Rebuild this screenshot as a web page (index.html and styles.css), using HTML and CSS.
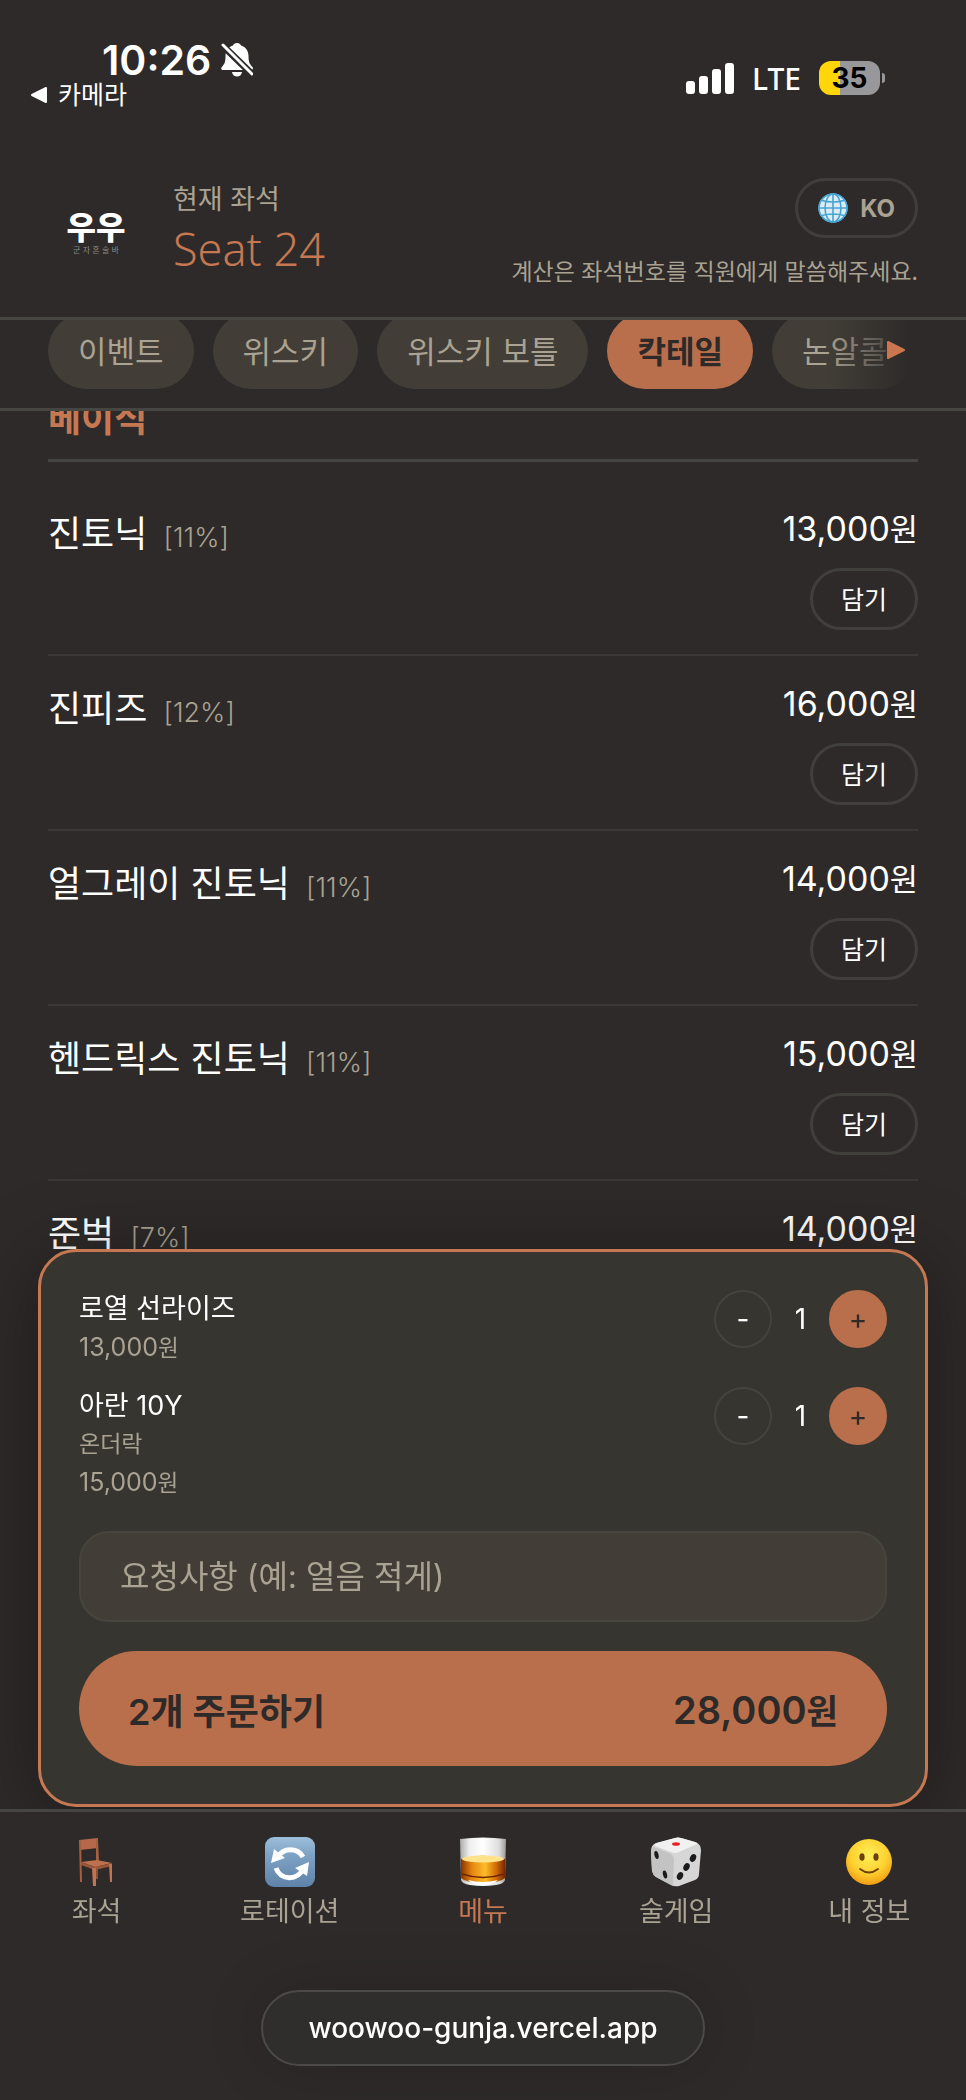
FILE: index.html
```html
<!DOCTYPE html>
<html lang="ko">
<head>
    <meta charset="UTF-8">
    <meta name="viewport" content="width=device-width, initial-scale=1.0">
    <title>우우 - 메뉴</title>
    <link rel="stylesheet" href="styles.css">
</head>
<body>
    <div class="status-bar">
        <div class="status-left">
            <div class="status-time">
                <span>10:26</span>
                <svg class="bell" viewBox="0 0 32 36" aria-hidden="true">
                    <path fill="#fff" d="M16 1c2 0 3.500 1 4 2.500 5 1.500 7.500 5.500 7.500 10.500 0 6 1 8 4 11 .8 1 .5 3-1.500 3H2C0 28-.2 26 .8 25c2.800-3 3.700-5 3.700-11C4.500 9 7 5 12 3.500 12.500 2 14 1 16 1z"/>
                    <path fill="#fff" d="M11 30h10c-.5 3-2.500 4.500-5 4.500S11.500 33 11 30z"/>
                    <path stroke="#2d2a29" stroke-width="7" d="M-1 1l34 33"/>
                    <path stroke="#fff" stroke-width="3" stroke-linecap="round" d="M2 3l29 29"/>
                </svg>
            </div>
            <a class="status-back" href="#">
                <svg class="back-arrow" viewBox="0 0 18 18" aria-hidden="true"><path fill="#fff" stroke="#fff" stroke-width="2" stroke-linejoin="round" d="M2 9l14-7v14z"/></svg>
                카메라
            </a>
        </div>
        <div class="status-right">
            <svg class="signal" viewBox="0 0 48 31" fill="#fff" aria-hidden="true">
                <rect x="0" y="18" width="9" height="13" rx="3"/>
                <rect x="13" y="13" width="9" height="18" rx="3"/>
                <rect x="26" y="6" width="9" height="25" rx="3"/>
                <rect x="39" y="0" width="9" height="31" rx="3"/>
            </svg>
            <span class="network">LTE</span>
            <span class="battery">35</span>
        </div>
    </div>

    <header class="header">
        <div class="logo">
            <span class="logo-name">우우</span>
            <span class="logo-sub">군 자 혼 술 바</span>
        </div>
        <div class="seat">
            <div class="seat-label">현재 좌석</div>
            <div class="seat-number">Seat 24</div>
        </div>
        <div class="header-side">
            <button class="lang-btn" type="button">
                <svg class="globe" viewBox="0 0 30 30" aria-hidden="true">
                    <circle cx="15" cy="15" r="14.500" fill="#dcebf5"/>
                    <g fill="none" stroke="#45a5d2" stroke-width="1.600">
                        <circle cx="15" cy="15" r="14"/>
                        <ellipse cx="15" cy="15" rx="8" ry="14"/>
                        <path d="M15 1v28M1 15h28M4 7.500c6 2 16 2 22 0M4 22.500c6-2 16-2 22 0"/>
                    </g>
                </svg>
                KO
            </button>
            <p class="pay-note">계산은 좌석번호를 직원에게 말씀해주세요.</p>
        </div>
    </header>

    <nav class="tabs">
        <div class="tabs-row">
            <button class="tab" type="button">이벤트</button>
            <button class="tab" type="button">위스키</button>
            <button class="tab" type="button">위스키 보틀</button>
            <button class="tab active" type="button">칵테일</button>
            <button class="tab" type="button">논알콜</button>
        </div>
        <div class="tabs-fade">
            <svg class="tabs-arrow" viewBox="0 0 18 20" aria-hidden="true"><path fill="#cc7650" stroke="#cc7650" stroke-width="2" stroke-linejoin="round" d="M1 2l16 8-16 8z"/></svg>
        </div>
    </nav>

    <main class="menu">
        <h2 class="menu-title">베이식</h2>
        <ul class="menu-list">
            <li class="menu-item">
                <div class="item-name">진토닉 <span class="abv">[11%]</span></div>
                <div class="item-side">
                    <span class="price">13,000<span class="won">원</span></span>
                    <button class="add-btn" type="button">담기</button>
                </div>
            </li>
            <li class="menu-item">
                <div class="item-name">진피즈 <span class="abv">[12%]</span></div>
                <div class="item-side">
                    <span class="price">16,000<span class="won">원</span></span>
                    <button class="add-btn" type="button">담기</button>
                </div>
            </li>
            <li class="menu-item">
                <div class="item-name">얼그레이 진토닉 <span class="abv">[11%]</span></div>
                <div class="item-side">
                    <span class="price">14,000<span class="won">원</span></span>
                    <button class="add-btn" type="button">담기</button>
                </div>
            </li>
            <li class="menu-item">
                <div class="item-name">헨드릭스 진토닉 <span class="abv">[11%]</span></div>
                <div class="item-side">
                    <span class="price">15,000<span class="won">원</span></span>
                    <button class="add-btn" type="button">담기</button>
                </div>
            </li>
            <li class="menu-item">
                <div class="item-name">준벅 <span class="abv">[7%]</span></div>
                <div class="item-side">
                    <span class="price">14,000<span class="won">원</span></span>
                    <button class="add-btn" type="button">담기</button>
                </div>
            </li>
        </ul>
    </main>

    <div class="dock">
        <section class="cart">
            <div class="cart-items">
                <div class="cart-item">
                    <div class="cart-info">
                        <div class="cart-name">로열 선라이즈</div>
                        <div class="cart-price">13,000<span class="won">원</span></div>
                    </div>
                    <div class="qty">
                        <button class="qty-btn" type="button" aria-label="빼기">-</button>
                        <span class="qty-value">1</span>
                        <button class="qty-btn plus" type="button" aria-label="더하기">+</button>
                    </div>
                </div>
                <div class="cart-item">
                    <div class="cart-info">
                        <div class="cart-name">아란 10Y</div>
                        <div class="cart-option">온더락</div>
                        <div class="cart-price">15,000<span class="won">원</span></div>
                    </div>
                    <div class="qty">
                        <button class="qty-btn" type="button" aria-label="빼기">-</button>
                        <span class="qty-value">1</span>
                        <button class="qty-btn plus" type="button" aria-label="더하기">+</button>
                    </div>
                </div>
            </div>
            <input class="request" type="text" aria-label="요청사항" placeholder="요청사항 (예: 얼음 적게)">
            <button class="order-btn" type="button">
                <span>2개 주문하기</span>
                <span class="order-total">28,000<span class="won">원</span></span>
            </button>
        </section>

        <nav class="bottom-nav">
            <a class="nav-item" href="#">
                <svg class="nav-icon" viewBox="-5 0 50 50" aria-hidden="true">
                    <path fill="#8d4f33" d="M18 26h3v16h-3z"/>
                    <path fill="#b5694a" d="M2 3l19-2v10L3 13z"/>
                    <path fill="#a75f41" d="M2 3h2l1 42H3zM19 1h2l1 24h-3z"/>
                    <path fill="#bd7150" d="M4 25l16-2 15 3-17 4z"/>
                    <path fill="#9a5638" d="M4 25l14 5v3L4 28zM18 30l17-4v3l-17 4z"/>
                    <path fill="#c07552" d="M15 31h4v18h-3zM32 27h3v18h-2z"/>
                </svg>
                좌석
            </a>
            <a class="nav-item" href="#">
                <svg class="nav-icon" viewBox="0 0 50 50" aria-hidden="true">
                    <defs><linearGradient id="rot" x1="0" y1="0" x2="0" y2="1"><stop offset="0" stop-color="#9dbfdc"/><stop offset=".35" stop-color="#7fa3c5"/><stop offset="1" stop-color="#5f83a8"/></linearGradient></defs>
                    <rect width="50" height="50" rx="9" fill="url(#rot)"/>
                    <g fill="none" stroke="#fff" stroke-width="5">
                        <path d="M38 20A14.500 14.500 0 0 0 13 20"/>
                        <path d="M11 31a14.500 14.500 0 0 0 27 1"/>
                    </g>
                    <path fill="#fff" d="M9 12L6 26l14-5zM44 25l-2 14-12-8z"/>
                </svg>
                로테이션
            </a>
            <a class="nav-item active" href="#">
                <svg class="nav-icon" viewBox="0 0 50 50" aria-hidden="true">
                    <defs>
                        <linearGradient id="glass" x1="0" y1="0" x2="1" y2="0"><stop offset="0" stop-color="#aaa"/><stop offset=".2" stop-color="#eee"/><stop offset=".5" stop-color="#fff"/><stop offset=".85" stop-color="#ddd"/><stop offset="1" stop-color="#999"/></linearGradient>
                        <linearGradient id="whisky" x1="0" y1="0" x2="1" y2="0"><stop offset="0" stop-color="#8a3300"/><stop offset=".25" stop-color="#e5860e"/><stop offset=".55" stop-color="#fdbb2a"/><stop offset=".8" stop-color="#d06a05"/><stop offset="1" stop-color="#742600"/></linearGradient>
                    </defs>
                    <path fill="url(#glass)" d="M2 2q23-3 46 0l-1 41q-1 4-9 5-13 2-26 0-8-1-9-5z"/>
                    <path fill="url(#whisky)" d="M3 22q22-7 44 0v19q-5 5-22 5T3 41z"/>
                    <ellipse cx="25" cy="22" rx="21" ry="3.500" fill="#ffe28a"/>
                    <path fill="none" stroke="#6b2503" stroke-width="1.500" d="M4 37q21 7 42 0"/>
                    <path fill="#fff" d="M10 43q15 4 30 0-5 5-15 5t-15-5z"/>
                </svg>
                메뉴
            </a>
            <a class="nav-item" href="#">
                <svg class="nav-icon" viewBox="0 0 50 50" aria-hidden="true">
                    <path fill="#d6d6d6" d="M5 6L24 1q3-1 6 0l14 4q6 2 6 8l-2 24q0 4-4 6l-16 6q-4 1-8-1L5 40q-3-2-4-6L0 14q0-6 5-8z"/>
                    <path fill="#f1f1f1" d="M6 6l18-5q3-1 6 0l14 4q3 1 2 2L28 15q-4 2-8 0L4 9q-1-2 2-3z"/>
                    <path fill="#c3c3c3" d="M3 10l17 7q3 2 3 7l-1 25-17-9q-3-2-4-6L0 15q0-4 3-5z"/>
                    <ellipse cx="25" cy="7" rx="4" ry="1.800" fill="#e8242b"/>
                    <g fill="#1b1b1d">
                        <ellipse cx="5.500" cy="18" rx="2" ry="4" transform="rotate(-14 5.500 18)"/>
                        <ellipse cx="14" cy="37.500" rx="2" ry="4" transform="rotate(-14 14 37.500)"/>
                        <ellipse cx="42" cy="21" rx="3" ry="4" transform="rotate(25 42 21)"/>
                        <ellipse cx="35.500" cy="30" rx="3" ry="4" transform="rotate(25 35.500 30)"/>
                        <ellipse cx="29" cy="39" rx="3" ry="4" transform="rotate(25 29 39)"/>
                    </g>
                </svg>
                술게임
            </a>
            <a class="nav-item" href="#">
                <svg class="nav-icon" viewBox="0 0 50 50" aria-hidden="true">
                    <defs><radialGradient id="face" cx=".5" cy=".35" r=".65"><stop offset="0" stop-color="#ffee58"/><stop offset=".6" stop-color="#fdd231"/><stop offset="1" stop-color="#f39c12"/></radialGradient></defs>
                    <circle cx="25" cy="25" r="23" fill="url(#face)"/>
                    <g fill="#6b3f06"><ellipse cx="18" cy="20" rx="2.600" ry="3.800"/><ellipse cx="32" cy="20" rx="2.600" ry="3.800"/></g>
                    <path fill="none" stroke="#6b3f06" stroke-width="1.800" stroke-linecap="round" d="M16 32q9 7 18 0"/>
                </svg>
                내 정보
            </a>
        </nav>

        <div class="browser-bar">
            <a class="url-pill" href="#">woowoo-gunja.vercel.app</a>
        </div>
    </div>
</body>
</html>
```

FILE: styles.css
```css
:root {
    --bg: #2d2a29;
    --line: #454541;
    --muted: #aaa292;
    --accent: #b96f4b;
    --accent-text: #c57852;
    --chip: #423e37;
    --cart: #373530;
}
* { margin: 0; padding: 0; box-sizing: border-box; }
body {
    min-height: 100vh;
    background: var(--bg);
    color: #fff;
    font-family: Inter, "Noto Sans CJK KR", sans-serif;
    overflow-x: hidden;
}
button, input { font-family: inherit; color: inherit; border: none; background: none; }
button { cursor: pointer; white-space: nowrap; }
a { color: inherit; text-decoration: none; }
ul { list-style: none; }
svg { display: block; flex: none; }

/* status bar */
.status-bar { display: flex; justify-content: space-between; padding: 36px 86px 0 30px; height: 150px; }
.status-time { display: flex; align-items: center; gap: 10px; padding-left: 72px; font-size: 41px; font-weight: 600; line-height: 48px; }
.bell { width: 32px; height: 36px; }
.status-back { display: flex; align-items: center; gap: 10px; font-size: 25px; line-height: 22px; }
.back-arrow { width: 18px; height: 18px; }
.status-right { display: flex; align-items: center; gap: 18px; height: 84px; }
.signal { width: 48px; height: 31px; }
.network { font-family: "Noto Sans", sans-serif; font-size: 30px; font-weight: 500; }
.battery {
    position: relative; width: 61px; height: 34px; border-radius: 12px;
    background: linear-gradient(90deg, #ffd60a 35%, #98989a 35%);
    color: #000; font-size: 28px; font-weight: 700; line-height: 34px; text-align: center;
}
.battery::after {
    content: ""; position: absolute; right: -5px; top: 12px;
    width: 3px; height: 10px; border-radius: 0 5px 5px 0; background: #98989a;
}

/* header */
.header { display: flex; gap: 29px; padding: 28px 48px; height: 170px; border-bottom: 3px solid var(--line); }
.logo { display: flex; flex-direction: column; align-items: center; width: 96px; padding-top: 34px; }
.logo-name { font-size: 32px; font-weight: 900; line-height: 32px; }
.logo-sub { font-size: 8px; line-height: 12px; color: #8b8985; }
.seat-label { font-size: 27px; line-height: 44px; color: var(--muted); }
.seat-number { font-family: "Noto Sans", sans-serif; font-size: 45px; font-weight: 300; line-height: 54px; color: var(--accent-text); }
.header-side { display: flex; flex-direction: column; align-items: flex-end; gap: 14px; margin-left: auto; }
.lang-btn {
    display: flex; align-items: center; gap: 12px; height: 60px; padding: 0 20px;
    border: 3px solid #403e3b; border-radius: 30px; color: var(--muted); font-size: 24px; font-weight: 700;
}
.globe { width: 30px; height: 30px; }
.pay-note { font-family: "Noto Sans CJK KR", sans-serif; font-size: 23px; line-height: 36px; color: var(--muted); white-space: nowrap; }

/* category tabs, scrolled slightly under the header */
.tabs { position: relative; height: 91px; overflow: hidden; border-bottom: 3px solid var(--line); }
.tabs-row { display: flex; gap: 19px; padding: 0 48px; margin-top: -7px; }
.tab { flex: none; height: 76px; padding: 0 30px 4px; border-radius: 38px; background: var(--chip); color: var(--muted); font-size: 31px; }
.tab.active { background: var(--accent); color: var(--bg); font-weight: 700; }
.tabs-fade {
    position: absolute; top: 0; right: 0; width: 140px; height: 100%;
    background: linear-gradient(90deg, transparent, var(--bg) 60%);
    display: flex; align-items: center; justify-content: center; padding-bottom: 28px;
}
.tabs-arrow { width: 18px; height: 20px; }

/* menu */
.menu { padding: 0 48px; overflow: hidden; }
.menu-title { margin-top: -17px; padding-bottom: 14px; border-bottom: 3px solid var(--line); color: var(--accent-text); font-size: 36px; line-height: 51px; }
.menu-list { padding-top: 19px; }
.menu-item { display: flex; justify-content: space-between; height: 175px; padding: 24px 0; border-bottom: 2px solid #3a3936; }
.item-name { font-size: 36px; line-height: 58px; }
.abv { margin-left: 6px; font-size: 27px; font-weight: 300; color: var(--muted); }
.item-side { display: flex; flex-direction: column; align-items: flex-end; gap: 14px; }
.price { font-size: 34px; line-height: 48px; }
.won { font-size: 90%; }
.add-btn { height: 63px; padding: 0 28px 2px; border: 3px solid #403f3c; border-radius: 32px; font-size: 25px; }

/* cart and bottom bars */
.dock { position: fixed; left: 0; right: 0; bottom: 0; }
.cart {
    display: flex; flex-direction: column; gap: 29px; margin: 0 38px 2px; padding: 38px;
    border: 3px solid var(--accent-text); border-radius: 38px; background: var(--cart);
    box-shadow: 0 10px 80px rgba(0, 0, 0, 0.35);
}
.cart-items { display: flex; flex-direction: column; gap: 20px; }
.cart-item { display: flex; justify-content: space-between; line-height: 38px; }
.cart-name { font-size: 27px; }
.cart-option { font-size: 23px; color: var(--muted); }
.cart-price { font-size: 25px; color: var(--muted); }
.qty { display: flex; align-items: center; height: 58px; }
.qty-btn { width: 58px; height: 58px; border: 2px solid #45433d; border-radius: 50%; font-size: 28px; }
.qty-btn.plus { border-color: var(--accent); background: var(--accent); color: var(--bg); }
.qty-value { width: 57px; font-size: 28px; text-align: center; }
.request { width: 100%; height: 91px; padding: 0 39px; border: 2px solid #47453e; border-radius: 30px; background: var(--chip); font-size: 32px; }
.request::placeholder { color: var(--muted); }
.order-btn {
    display: flex; align-items: center; justify-content: space-between; width: 100%; height: 115px;
    padding: 0 49px; border-radius: 58px; background: var(--accent); color: var(--bg); font-size: 36px; font-weight: 600;
}
.order-total { font-size: 38px; }
.bottom-nav { display: grid; grid-template-columns: repeat(5, 1fr); padding: 25px 0 0; height: 150px; border-top: 3px solid var(--line); background: var(--bg); }
.nav-item { display: flex; flex-direction: column; align-items: center; gap: 5px; color: var(--muted); font-size: 27px; line-height: 40px; }
.nav-item.active { color: var(--accent-text); }
.nav-icon { width: 50px; height: 50px; }
.browser-bar { display: flex; justify-content: center; padding: 31px 0 34px; background: var(--bg); }
.url-pill {
    padding: 0 45px; border: 2px solid #4b4a48; border-radius: 38px; background: #2f2e2c;
    font-size: 28px; font-weight: 500; line-height: 72px; box-shadow: 0 0 60px rgba(0, 0, 0, 0.15);
}
```
